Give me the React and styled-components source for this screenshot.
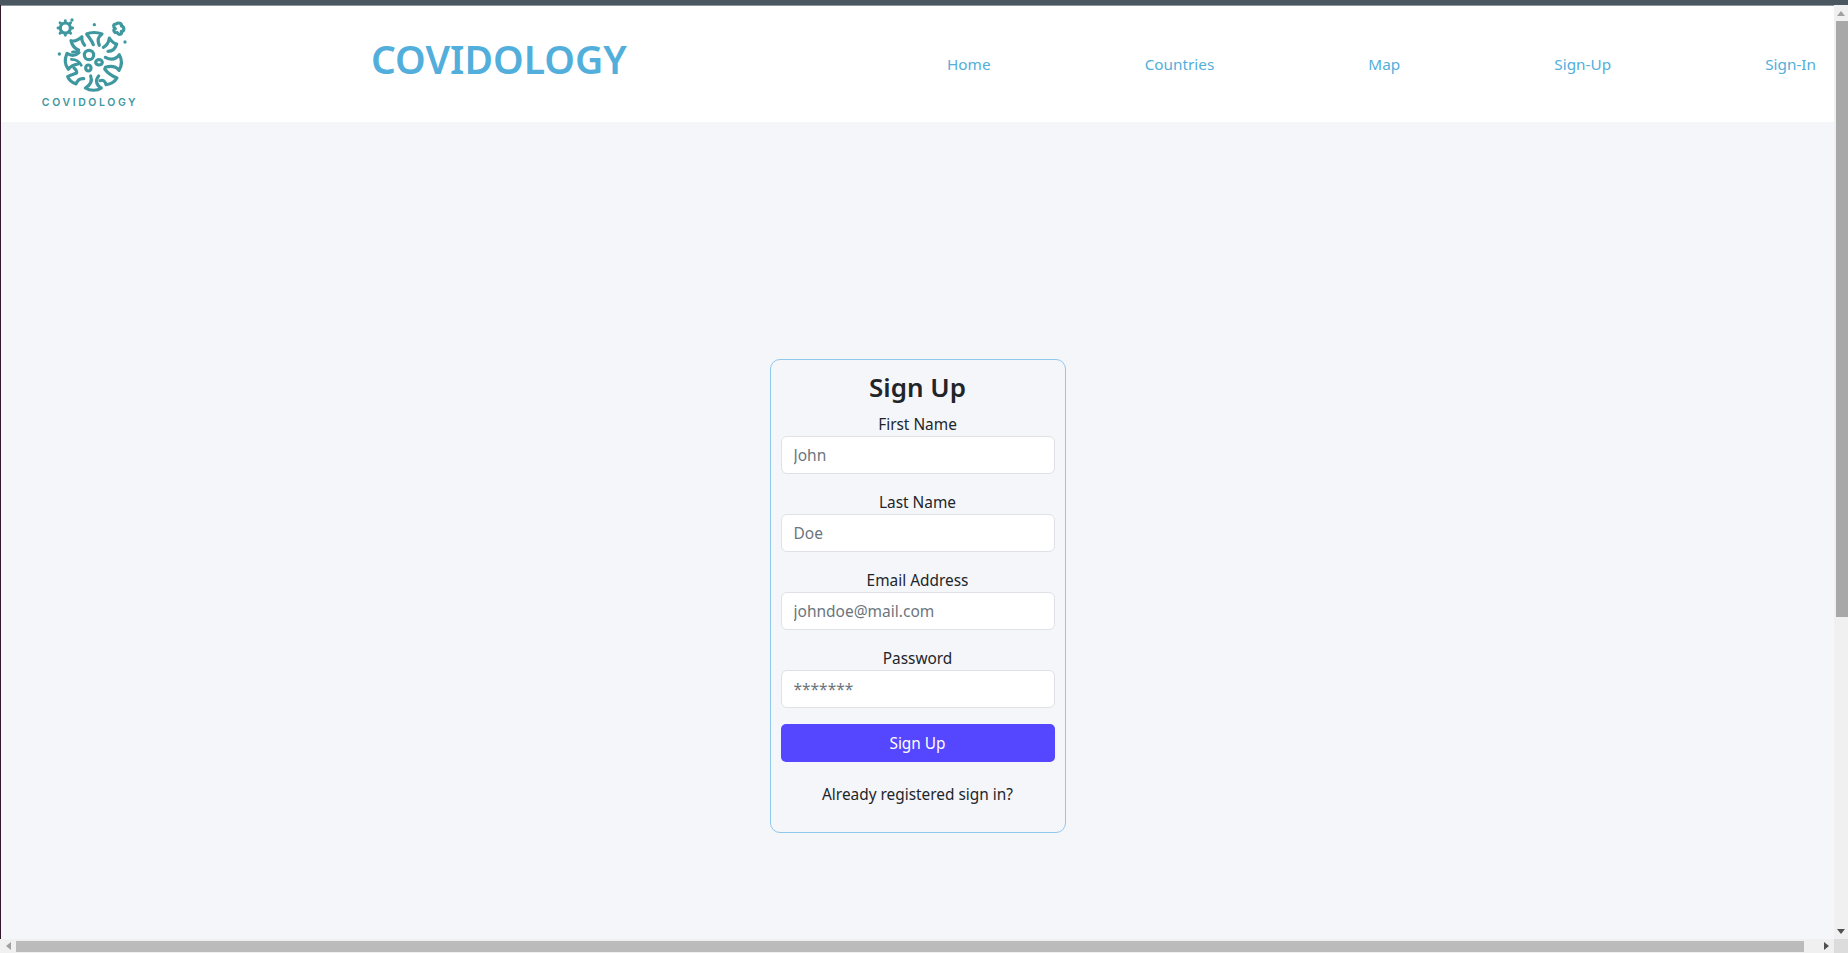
import React from 'react';
import styled, { createGlobalStyle } from 'styled-components';

const GlobalStyle = createGlobalStyle`
  html, body {
    margin: 0;
    padding: 0;
    height: 953px;
    overflow: hidden;
    background: #f5f6fa;
    font-family: "Noto Sans", "Open Sans", sans-serif;
    color: #212529;
  }
  * { box-sizing: border-box; }
`;

const FIELDS = [
  { label: 'First Name', placeholder: 'John', type: 'text' },
  { label: 'Last Name', placeholder: 'Doe', type: 'text' },
  { label: 'Email Address', placeholder: 'johndoe@mail.com', type: 'email' },
  { label: 'Password', placeholder: '*******', type: 'text' },
];

const NAV_LINKS = ['Home', 'Countries', 'Map', 'Sign-Up', 'Sign-In'];

const VirusLogo = () => (
  <svg width="77" height="80" viewBox="150 40 231 240" fill="none" stroke="#3f989f" strokeWidth="9.5" strokeLinecap="round" strokeLinejoin="round">
    <circle cx="190" cy="82" r="15" />
    <path d="M190 60V66M190 98V104M168 82H174M206 82H212M174 66L179 71M201 93L206 98M174 98L179 93M201 71L206 66" strokeWidth="8.5" />
    <path d="M342 70C350 64 360 68 358 76C368 78 368 92 358 92C362 102 350 104 346 96C336 98 332 88 340 84C332 78 334 70 342 70Z" />
    <g fill="#3f989f" stroke="none">
      <circle cx="210" cy="58" r="5" />
      <circle cx="277" cy="72" r="5" />
      <circle cx="369" cy="124" r="5" />
      <circle cx="172" cy="160" r="5" />
    </g>
    <circle cx="261" cy="163" r="14" />
    <ellipse cx="291" cy="185" rx="10" ry="8" />
    <ellipse cx="259" cy="202" rx="8" ry="9" />
    <path d="M274 132C270 120 262 112 254 100C266 94 286 94 300 100C290 108 284 114 292 134" />
    <path d="M248 134C240 124 238 116 240 108C228 118 218 124 207 120C210 134 218 144 230 148C222 154 216 154 212 154" />
    <path d="M304 140C316 134 320 126 322 112C328 122 334 128 344 130C340 144 334 152 318 152" />
    <path d="M310 170C328 180 342 176 352 162C360 176 360 194 351 209C342 198 330 194 310 200" />
    <path d="M231 156C218 168 206 166 195 158C188 174 188 192 199 206C206 196 216 192 228 190" />
    <path d="M208 176C220 176 232 182 238 194" strokeWidth="8" />
    <path d="M216 202C224 208 226 216 222 218C212 222 204 224 197 228C201 238 210 246 222 250C226 240 232 232 245 234" />
    <path d="M266 226C272 242 264 254 250 262C264 271 286 271 298 262C284 254 278 240 290 226" />
    <path d="M308 205C316 216 330 226 345 232C338 244 326 250 312 252C310 242 304 236 294 240" />
  </svg>
);

const App = () => (
  <Page>
    <GlobalStyle />
    <Content>
      <Header>
        <Brand>
          <VirusLogo />
          <BrandName>COVIDOLOGY</BrandName>
        </Brand>
        <Title>COVIDOLOGY</Title>
        <Nav>
          {NAV_LINKS.map((link) => <NavLink key={link} href="#">{link}</NavLink>)}
        </Nav>
      </Header>
      <Main>
        <Card>
          <Heading>Sign Up</Heading>
          {FIELDS.map((field) => (
            <Field key={field.label}>
              <Label>{field.label}</Label>
              <Input type={field.type} placeholder={field.placeholder} />
            </Field>
          ))}
          <SubmitButton type="button">Sign Up</SubmitButton>
          <SignInNote>Already registered sign in?</SignInNote>
        </Card>
      </Main>
    </Content>
    <VerticalTrack>
      <ScrollButton><Triangle $dir="up" /></ScrollButton>
      <VerticalThumb />
      <ScrollButton><Triangle $dir="down" /></ScrollButton>
    </VerticalTrack>
    <HorizontalTrack>
      <ScrollButton><Triangle $dir="left" /></ScrollButton>
      <HorizontalThumb />
      <ScrollButton><Triangle $dir="right" /></ScrollButton>
    </HorizontalTrack>
    <ScrollCorner />
  </Page>
);

export default App;

const Page = styled.div`
  width: 1848px;
  height: 953px;
  border-top: 5px solid #4a5660;
  display: grid;
  grid-template-columns: 1fr 14px;
  grid-template-rows: 1fr 14px;
  overflow: hidden;
`;

const Content = styled.div`
  border-left: 1px solid #33192b;
  min-height: 0;
  overflow: hidden;
`;

const Header = styled.header`
  height: 117px;
  background: #fff;
  border-top: 1px solid #8d979f;
  display: flex;
  align-items: center;
  padding: 0 18px 0 40px;
`;

const Brand = styled.div`
  width: 98px;
  height: 116px;
  display: flex;
  flex-direction: column;
  align-items: center;
  padding-top: 8px;
`;

const BrandName = styled.span`
  font-family: "Inter", "Noto Sans", sans-serif;
  font-size: 10.5px;
  font-weight: 600;
  line-height: 12px;
  letter-spacing: 2.6px;
  color: #3f989f;
  white-space: nowrap;
  margin-top: 3px;
`;

const Title = styled.h1`
  margin: 0 0 9px 232px;
  font-size: 39px;
  font-weight: 600;
  line-height: 1.2;
  color: #52aedb;
`;

const Nav = styled.nav`
  margin: 0 0 1px auto;
  width: 869px;
  display: flex;
  justify-content: space-between;
`;

const NavLink = styled.a`
  font-size: 15.3px;
  line-height: 24px;
  color: #52aedb;
  text-decoration: none;
`;

const Main = styled.main`
  display: flex;
  justify-content: center;
  padding-top: 237px;
`;

const Card = styled.form`
  width: 296px;
  height: 474px;
  border: 1px solid #90c8ea;
  border-radius: 10px;
  padding: 10px;
`;

const Heading = styled.h3`
  margin: 0 0 8px;
  padding-top: 1px;
  height: 33.6px;
  font-size: 26px;
  font-weight: 600;
  line-height: 33.6px;
  text-align: center;
`;

const Field = styled.div`
  margin-bottom: 16px;
  text-align: center;
`;

const Label = styled.label`
  display: block;
  height: 24px;
  padding-top: 1px;
  font-size: 15.4px;
  line-height: 24px;
`;

const Input = styled.input`
  display: block;
  width: 100%;
  height: 38px;
  padding: 6px 12px;
  font: inherit;
  font-size: 15.5px;
  color: #495057;
  background: #fff;
  border: 1px solid #dee2e6;
  border-radius: 6px;
  outline: none;

  &::placeholder {
    color: #6c757d;
    opacity: 1;
  }
`;

const SubmitButton = styled.button`
  display: block;
  width: 100%;
  height: 38px;
  padding-top: 2px;
  border: none;
  border-radius: 5px;
  background: #5546ff;
  color: #fff;
  font: inherit;
  font-size: 15.4px;
`;

const SignInNote = styled.p`
  margin: 21px 0 0;
  font-size: 15.4px;
  line-height: 24px;
  text-align: center;
`;

const VerticalTrack = styled.div`
  display: flex;
  flex-direction: column;
  justify-content: space-between;
  background: #f0f0f0;
`;

const VerticalThumb = styled.div`
  height: 596px;
  margin: 0 0 auto 2px;
  background: #a8a8a8;
`;

const HorizontalTrack = styled.div`
  display: flex;
  background: #f0f0f0;
`;

const HorizontalThumb = styled.div`
  width: 1788px;
  margin: 2px auto 1px 0;
  background: #bbb;
`;

const ScrollCorner = styled.div`
  background: #dcdcdc;
`;

const ScrollButton = styled.div`
  flex: 0 0 16px;
  display: flex;
  align-items: center;
  justify-content: center;
`;

const triangles = {
  up: 'border-width: 0 4px 5px; border-color: transparent transparent #a0a0a0;',
  down: 'border-width: 5px 4px 0; border-color: #505050 transparent transparent;',
  left: 'border-width: 4px 5px 4px 0; border-color: transparent #a0a0a0 transparent transparent;',
  right: 'border-width: 4px 0 4px 5px; border-color: transparent transparent transparent #505050;',
};

const Triangle = styled.span`
  width: 0;
  height: 0;
  border-style: solid;
  ${(props) => triangles[props.$dir]}
`;
